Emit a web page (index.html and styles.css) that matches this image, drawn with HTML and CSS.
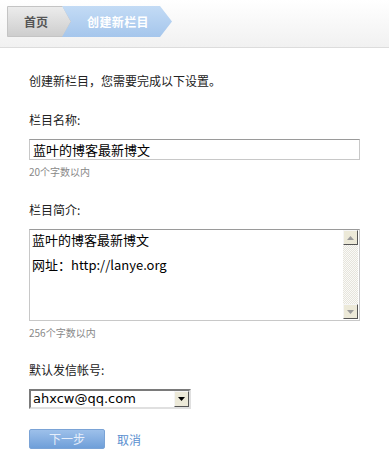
FILE: index.html
```html
<!DOCTYPE html>
<html lang="zh">
<head>
<meta charset="utf-8">
<link rel="stylesheet" href="styles.css">
</head>
<body>
<div class="header">
  <div class="crumbs">
    <div class="crumb home">
      <svg class="crumb-bg" width="66" height="31" viewBox="0 0 66 31">
        <defs><linearGradient id="g1" x1="0" y1="0" x2="0" y2="1"><stop offset="0" stop-color="#ececec"/><stop offset="1" stop-color="#cdcdcd"/></linearGradient></defs>
        <path d="M0.5 0.5 H56 L64 15.5 L56 30.5 H0.5 Z" fill="url(#g1)" stroke="#c4c4c4"/>
      </svg>
      <span class="crumb-text">首页</span>
    </div>
    <div class="crumb current">
      <svg class="crumb-bg" width="112" height="31" viewBox="0 0 112 31">
        <defs><linearGradient id="g2" x1="0" y1="0" x2="0" y2="1"><stop offset="0" stop-color="#c3dbf5"/><stop offset="1" stop-color="#a5c6ec"/></linearGradient></defs>
        <path d="M0 0 H98 L110 15.5 L98 31 H0 L9 15.5 Z" fill="url(#g2)"/>
      </svg>
      <span class="crumb-text">创建新栏目</span>
    </div>
  </div>
</div>
<div class="content">
  <p class="intro">创建新栏目，您需要完成以下设置。</p>
  <div class="field">
    <div class="label">栏目名称:</div>
    <div class="input">蓝叶的博客最新博文</div>
    <div class="hint">20个字数以内</div>
  </div>
  <div class="field">
    <div class="label">栏目简介:</div>
    <div class="textarea">
      <div class="ta-text">
        <div>蓝叶的博客最新博文</div>
        <div class="ta-line2">网址：http://lanye.org</div>
      </div>
      <div class="scrollbar">
        <div class="sb-btn"><svg width="7" height="4" viewBox="0 0 7 4"><path d="M3.5 0 L7 4 H0 Z" fill="#9a9a9a"/></svg></div>
        <div class="sb-track"></div>
        <div class="sb-btn"><svg width="7" height="4" viewBox="0 0 7 4"><path d="M0 0 H7 L3.5 4 Z" fill="#9a9a9a"/></svg></div>
      </div>
    </div>
    <div class="hint">256个字数以内</div>
  </div>
  <div class="field field-last">
    <div class="label">默认发信帐号:</div>
    <div class="select">
      <span class="sel-text">ahxcw@qq.com</span>
      <span class="sel-btn"><svg width="7" height="4" viewBox="0 0 7 4"><path d="M0 0 H7 L3.5 4 Z" fill="#000"/></svg></span>
    </div>
  </div>
  <div class="actions">
    <span class="btn">下一步</span>
    <span class="cancel">取消</span>
  </div>
</div>
</body>
</html>
```
FILE: styles.css
```css
* { box-sizing: border-box; }
html, body { margin: 0; padding: 0; background: #fff; }
body {
  font-family: "Noto Sans CJK SC", "DejaVu Sans", sans-serif;
  font-size: 12px;
  color: #222;
  width: 389px;
  height: 460px;
  overflow: hidden;
}
.header {
  height: 48px;
  background: linear-gradient(#ffffff, #f1f1f1);
  border-bottom: 1px solid #dcdcdc;
  padding: 6px 0 0 7px;
}
.crumbs { display: flex; }
.crumb { position: relative; height: 31px; display: flex; align-items: center; }
.crumb-bg { position: absolute; left: 0; top: 0; }
.crumb-text { position: relative; font-size: 12px; font-weight: bold; line-height: 31px; }
.home { width: 66px; padding-left: 17px; }
.home .crumb-text { color: #555; }
.current { width: 112px; margin-left: -11px; padding-left: 25px; }
.current .crumb-text { color: #fff; letter-spacing: 0.4px; }
.content { padding: 25px 29px 0; }
.intro { margin: 0 0 4px; line-height: 16px; }
.field { margin-top: 23px; }
.field-last { margin-top: 22px; }
.label { line-height: 16px; margin-bottom: 11px; }
.input {
  width: 331px;
  height: 21px;
  border: 1px solid #c8c8c8;
  border-top-color: #9a9a9a;
  font-size: 13px;
  line-height: 19px;
  padding-left: 3px;
  color: #000;
}
.hint { color: #888; font-size: 10px; line-height: 14px; margin-top: 5px; }
.textarea {
  width: 331px;
  height: 92px;
  border: 1px solid #c8c8c8;
  border-top-color: #9a9a9a;
  display: flex;
}
.ta-text { flex: 1; padding: 1px 2px; font-size: 13px; line-height: 17px; color: #000; }
.ta-line2 { margin-top: 8px; }
.scrollbar { width: 15px; display: flex; flex-direction: column; margin: 0 1px 1px 0; }
.sb-btn {
  width: 15px; height: 15px;
  background: #ece9d8;
  border: 1px solid;
  border-color: #f5f5f5 #555 #555 #f5f5f5;
  display: flex; align-items: center; justify-content: center;
}
.sb-track {
  flex: 1;
  background-color: #f4f3ee;
  background-image: repeating-conic-gradient(#e6e4dc 0 25%, #fafaf7 0 50%);
  background-size: 2px 2px;
}
.select {
  width: 162px;
  height: 20px;
  border: 2px solid;
  border-color: #7a7a7a #e0e0e0 #e0e0e0 #7a7a7a;
  display: flex;
  align-items: center;
}
.sel-text { flex: 1; font-family: "DejaVu Sans", sans-serif; font-size: 13px; padding-left: 2px; color: #000; line-height: 16px; }
.sel-btn {
  width: 15px; height: 16px;
  background: #ece9d8;
  border: 1px solid;
  border-color: #f5f5f5 #555 #555 #f5f5f5;
  display: flex; align-items: center; justify-content: center;
}
.actions { display: flex; align-items: center; margin-top: 20px; }
.btn {
  width: 76px; height: 20px;
  background: linear-gradient(#9dc0ea, #6f9fd9);
  border: 1px solid #7aa3d6;
  border-radius: 2px;
  color: #e6eefa;
  text-align: center;
  line-height: 18px;
  font-size: 12px;
}
.cancel { color: #5a8fcf; margin-left: 12px; font-size: 12px; }
```
